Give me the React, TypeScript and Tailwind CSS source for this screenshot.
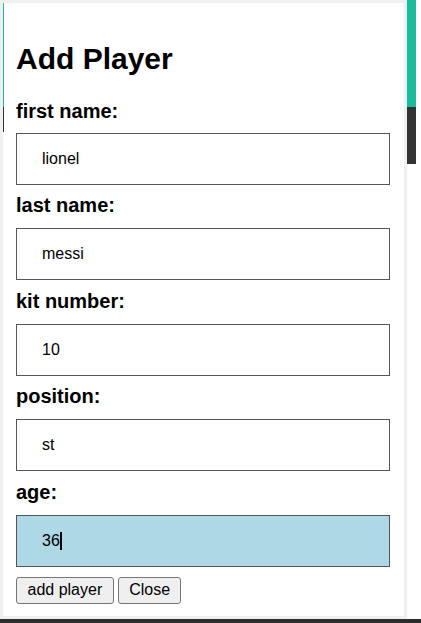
import { useState } from "react";

interface Field {
  id: string;
  label: string;
  value: string;
}

const initialFields: Field[] = [
  { id: "firstName", label: "first name:", value: "lionel" },
  { id: "lastName", label: "last name:", value: "messi" },
  { id: "kitNumber", label: "kit number:", value: "10" },
  { id: "position", label: "position:", value: "st" },
  { id: "age", label: "age:", value: "36" },
];

export default function App() {
  const [fields, setFields] = useState<Field[]>(initialFields);
  const focusedId = "age";

  const handleChange = (id: string, value: string) => {
    setFields((prev) => prev.map((f) => (f.id === id ? { ...f, value } : f)));
  };

  return (
    <div className="relative h-[623px] w-[421px] overflow-hidden bg-white font-['Liberation_Sans',Arial,sans-serif] text-black">
      {/* page behind the modal */}
      <div className="absolute left-[407px] top-0 h-[107px] w-[9px] bg-[#1abc9c]" />
      <div className="absolute left-[407px] top-[107px] h-[57px] w-[9px] bg-[#333333]" />
      <div className="absolute bottom-0 left-0 h-[4px] w-full bg-[#2b2b2b]" />

      {/* modal */}
      <div className="absolute left-0 top-0 h-[619px] w-[407px] bg-[#f0f0f0] p-[3px]">
        <div className="relative h-full w-full bg-white">
          <div className="absolute left-0 top-0 h-[104px] w-px bg-[#1abc9c]" />
          <div className="absolute left-0 top-[104px] h-[25px] w-px bg-[#333333]" />

          <div className="flex flex-col pl-[13px] pt-[36.5px]">
            <h1 className="text-[30px] font-bold leading-[37px]">Add Player</h1>
            <div className="h-[13.5px]" />
            {fields.map((field, i) => {
              const focused = field.id === focusedId;
              return (
                <div key={field.id} className="flex flex-col">
                  <label
                    htmlFor={field.id}
                    className={
                      i === 0
                        ? "mt-[9.5px] mb-[10px] text-[20px] font-bold leading-[23px]"
                        : "mt-[9.5px] mb-[11px] text-[20px] font-bold leading-[23px]"
                    }
                  >
                    {field.label}
                  </label>
                  <div className="relative">
                    <input
                      id={field.id}
                      type="text"
                      value={field.value}
                      onChange={(e) => handleChange(field.id, e.target.value)}
                      className={
                        focused
                          ? "h-[52px] w-[374px] border border-[#555555] bg-[#add8e6] pl-[25px] text-[16px] text-black outline-none"
                          : "h-[52px] w-[374px] border border-[#555555] bg-white pl-[25px] text-[16px] text-black outline-none"
                      }
                    />
                    {focused && (
                      <span className="pointer-events-none absolute left-[44px] top-[17.5px] h-[18px] w-[2px] bg-black" />
                    )}
                  </div>
                </div>
              );
            })}
            <div className="mt-[10px] flex gap-[4.5px]">
              <button
                type="button"
                className="h-[27px] rounded-[3px] border border-[#767676] bg-[#efefef] px-[10.5px] text-[16px] leading-[18px] text-black"
              >
                add player
              </button>
              <button
                type="button"
                className="h-[27px] rounded-[3px] border border-[#767676] bg-[#efefef] px-[10px] text-[16px] leading-[18px] text-black"
              >
                Close
              </button>
            </div>
          </div>
        </div>
      </div>
    </div>
  );
}
